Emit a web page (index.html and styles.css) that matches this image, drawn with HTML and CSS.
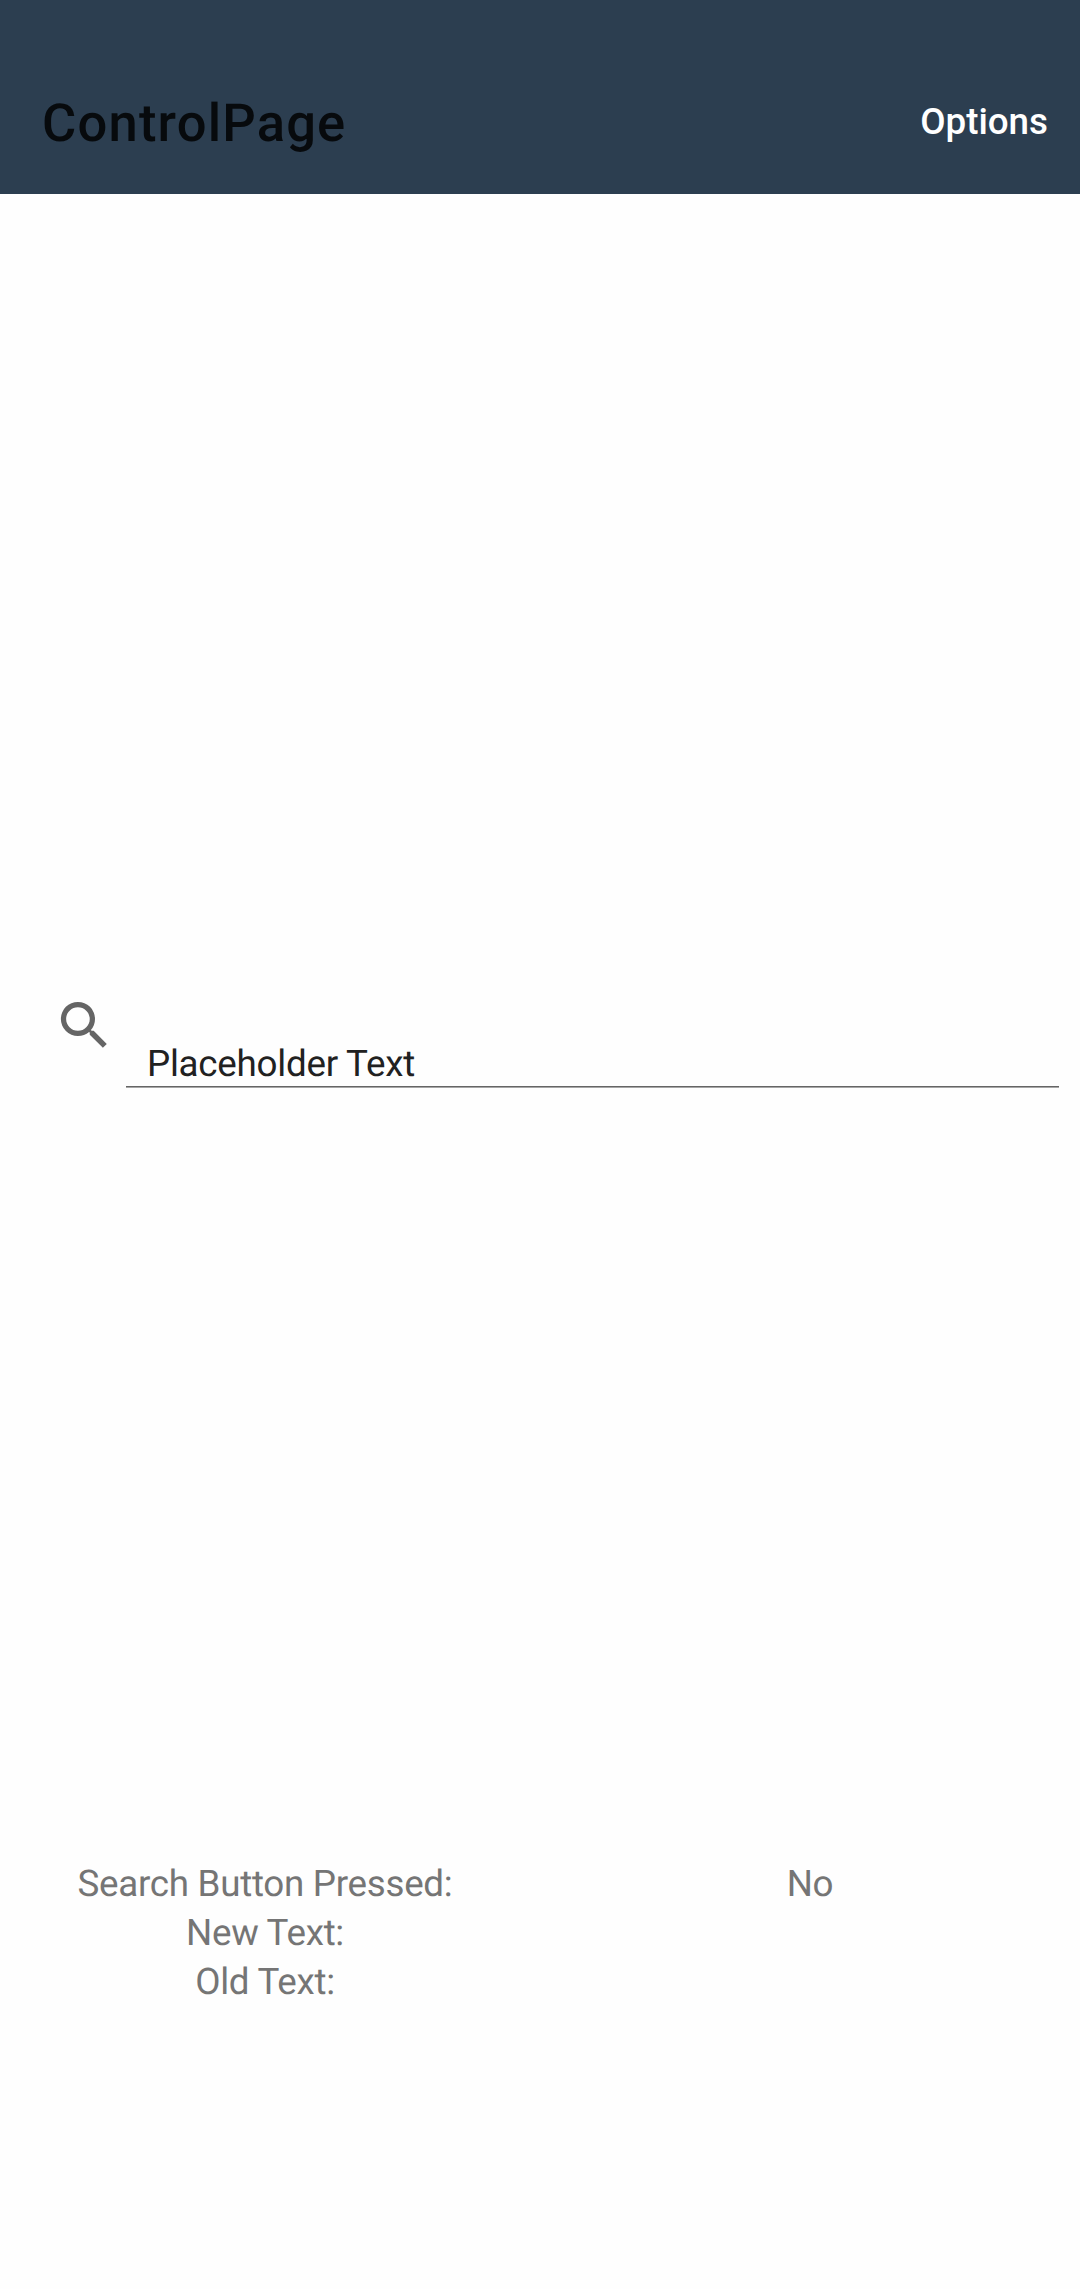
FILE: index.html
```html
<!DOCTYPE html>
<html lang="en">
<head>
<meta charset="utf-8">
<title>ControlPage</title>
<link rel="stylesheet" href="styles.css">
</head>
<body>
<header class="toolbar">
  <h1 class="title">ControlPage</h1>
  <button class="options">Options</button>
</header>
<main class="content">
  <div class="search">
    <svg class="search-icon" viewBox="0 0 24 24"><path d="M15.5 14h-.79l-.28-.27A6.471 6.471 0 0 0 16 9.5 6.5 6.5 0 1 0 9.5 16c1.61 0 3.09-.59 4.23-1.57l.27.28v.79l5 4.99L20.49 19l-4.99-5zm-6 0C7.01 14 5 11.99 5 9.5S7.01 5 9.5 5 14 7.01 14 9.5 11.99 14 9.5 14z"/></svg>
    <div class="field">Placeholder Text</div>
  </div>
  <dl class="status">
    <dt>Search Button Pressed:</dt><dd>No</dd>
    <dt>New Text:</dt><dd></dd>
    <dt>Old Text:</dt><dd></dd>
  </dl>
</main>
</body>
</html>
```
FILE: styles.css
```css
body {
  margin: 0;
  height: 2289px;
  display: flex;
  flex-direction: column;
  background: #fefefe;
  font-family: Roboto, sans-serif;
  text-rendering: geometricPrecision;
}
.toolbar {
  box-sizing: border-box;
  height: 194px;
  padding: 50px 32px 0 42px;
  display: flex;
  align-items: center;
  justify-content: space-between;
  background: #2c3e50;
}
.title {
  margin: 2px 0 0;
  font-size: 52.5px;
  font-weight: 500;
  line-height: 62px;
  letter-spacing: 1.2px;
  color: #070a0d;
}
.options {
  padding: 0;
  border: 0;
  background: none;
  font: 500 36.75px/44px Roboto, sans-serif;
  color: #fff;
}
.content {
  display: flex;
  flex-direction: column;
}
.search {
  display: flex;
  margin: 794px 21px 0 53px;
}
.search-icon {
  width: 63px;
  height: 63px;
  margin: 6px 10px 0 0;
  fill: #656565;
}
.field {
  box-sizing: border-box;
  flex: 1;
  height: 99px;
  padding: 54px 21px 0;
  border-bottom: 1px solid #656565;
  box-shadow: 0 1px #a6a6a6;
  font-size: 36.75px;
  line-height: 44px;
  letter-spacing: -0.25px;
  color: #212121;
}
.status {
  display: grid;
  grid-template-columns: 530px 540px;
  column-gap: 10px;
  grid-auto-rows: 49px;
  margin: 772px 0 0;
  font-size: 36.75px;
  line-height: 49px;
  letter-spacing: -0.28px;
  text-align: center;
  color: #757575;
}
.status dd {
  margin: 0;
}
```
